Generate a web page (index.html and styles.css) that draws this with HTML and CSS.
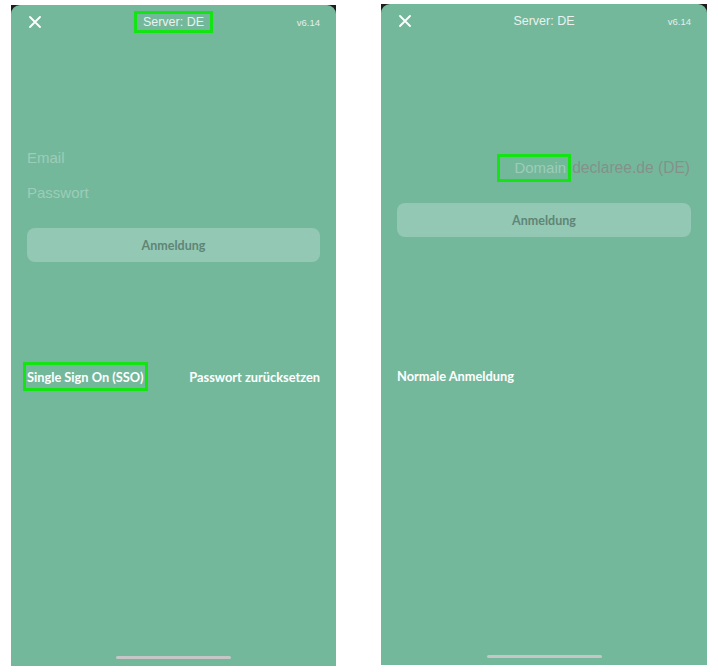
FILE: index.html
```html
<!DOCTYPE html>
<html lang="de">
<head>
<meta charset="utf-8">
<title>Anmeldung</title>
<link rel="stylesheet" href="styles.css">
</head>
<body>
<div class="screens">
  <div class="phone phone-left">
    <div class="screen">
      <div class="header">
        <svg class="close" width="12" height="12" viewBox="0 0 12 12"><path d="M1 1 L11 11 M11 1 L1 11" stroke="#fff" stroke-width="1.8" stroke-linecap="round"/></svg>
        <span class="title boxed-title">Server: DE</span>
        <span class="version">v6.14</span>
      </div>
      <div class="field field-email">Email</div>
      <div class="field field-pass">Passwort</div>
      <div class="btn btn-left">Anmeldung</div>
      <div class="links links-left">
        <span class="link marked">Single Sign On (SSO)</span>
        <span class="link">Passwort zurücksetzen</span>
      </div>
      <div class="spacer"></div>
      <div class="home"></div>
    </div>
  </div>
  <div class="phone phone-right">
    <div class="screen">
      <div class="header">
        <svg class="close" width="12" height="12" viewBox="0 0 12 12"><path d="M1 1 L11 11 M11 1 L1 11" stroke="#fff" stroke-width="1.8" stroke-linecap="round"/></svg>
        <span class="title">Server: DE</span>
        <span class="version">v6.14</span>
      </div>
      <div class="domain-row">
        <span class="domain-field">Domain</span>
        <span class="domain-suffix">declaree.de (DE)</span>
      </div>
      <div class="btn btn-right">Anmeldung</div>
      <div class="links links-right">
        <span class="link">Normale Anmeldung</span>
      </div>
      <div class="spacer"></div>
      <div class="home"></div>
    </div>
  </div>
</div>
</body>
</html>
```
FILE: styles.css
```css
html, body {
  margin: 0;
  padding: 0;
  background: #ffffff;
}
body {
  width: 718px;
  height: 672px;
  overflow: hidden;
  font-family: "Liberation Sans", Arial, sans-serif;
}
.screens {
  display: flex;
  align-items: flex-start;
  gap: 45px;
  padding-left: 11px;
}
.phone {
  background: #1c1c1c;
  height: 661px;
}
.phone-left {
  width: 325px;
  margin-top: 5px;
}
.phone-right {
  width: 326px;
  margin-top: 4px;
}
.screen {
  height: 100%;
  background: #74b89c;
  border-radius: 9px 9px 0 0;
  display: flex;
  flex-direction: column;
  padding: 0 16px;
  box-sizing: border-box;
}
.header {
  height: 34px;
  display: grid;
  grid-template-columns: 1fr auto 1fr;
  align-items: center;
}
.close {
  display: block;
  margin-left: 2px;
}
.title {
  font-size: 12.5px;
  line-height: 14px;
  color: #e9f2ee;
  padding: 1px 6px;
  border: 3px solid transparent;
}
.boxed-title {
  border-color: #14e314;
}
.version {
  justify-self: end;
  font-size: 9.5px;
  color: #e4efea;
}
.field {
  font-size: 15px;
  line-height: 20px;
  color: #9ccdb8;
}
.field-email {
  margin-top: 109px;
}
.field-pass {
  margin-top: 15px;
}
.btn {
  height: 34px;
  border-radius: 8px;
  background: #93c8b4;
  color: #5f8576;
  font-family: Lato, "Open Sans", sans-serif;
  font-weight: 700;
  font-size: 12.5px;
  display: flex;
  align-items: center;
  justify-content: center;
}
.btn-left {
  margin-top: 25px;
}
.btn-right {
  margin-top: 21px;
}
.links {
  display: flex;
  justify-content: space-between;
  line-height: 20px;
}
.links-left {
  margin-top: 105px;
}
.links-right {
  margin-top: 129px;
}
.link {
  font-family: Lato, "Open Sans", sans-serif;
  font-weight: 700;
  font-size: 12.8px;
  color: #ffffff;
}
.marked {
  position: relative;
}
.marked::after {
  content: "";
  position: absolute;
  top: -5px;
  bottom: -4px;
  left: -4px;
  right: -5px;
  border: 3px solid #14e314;
}
.domain-row {
  margin-top: 116px;
  height: 28px;
  display: flex;
  justify-content: flex-end;
  align-items: center;
  padding-right: 1px;
  font-size: 15px;
}
.domain-field {
  width: 74px;
  height: 28px;
  box-sizing: border-box;
  border: 3px solid #14e314;
  text-align: right;
  padding-right: 2px;
  line-height: 22px;
  color: #9ccdb8;
}
.domain-suffix {
  margin-left: 1px;
  font-size: 15.6px;
  color: #84918a;
}
.spacer {
  flex: 1;
}
.home {
  align-self: center;
  width: 115px;
  height: 3px;
  border-radius: 2px;
  background: #c6c6c6;
  margin-bottom: 7px;
}
```
